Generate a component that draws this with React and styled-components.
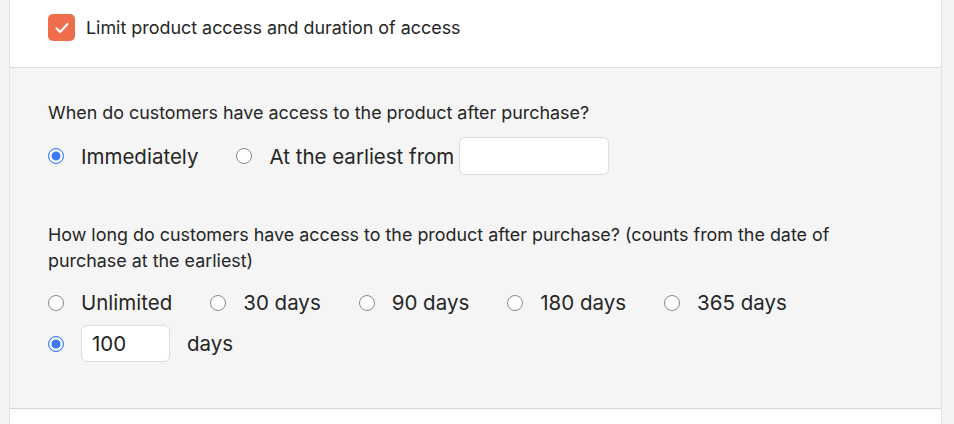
import React from "react";
import styled, { createGlobalStyle } from "styled-components";

const GlobalStyle = createGlobalStyle`
  body {
    margin: 0;
    background: #f3f3f3;
    font-family: Inter, "Noto Sans", sans-serif;
    color: #262626;
  }
`;

const Page = styled.div`
  padding: 0 12px 0 9px;
  height: 424px;
  overflow: hidden;
`;

const Card = styled.div`
  background: #fff;
  border-left: 1px solid #e2e2e2;
  border-right: 1px solid #e2e2e2;
  height: 100%;
`;

const Header = styled.div`
  display: flex;
  align-items: center;
  gap: 11px;
  height: 68px;
  padding: 0 38px;
  box-sizing: border-box;
  border-bottom: 1px solid #dadada;
  font-size: 17.9px;
`;

const CheckBox = styled.span`
  width: 27px;
  height: 27px;
  border-radius: 5px;
  background: #ef6d4b;
  display: flex;
  align-items: center;
  justify-content: center;
  margin-top: -12px;
`;

const HeaderLabel = styled.span`
  margin-top: -12px;
`;

const Body = styled.div`
  background: #f5f5f5;
  border-bottom: 1px solid #d6d6d6;
  padding: 32px 38px 46px;
  display: flex;
  flex-direction: column;
`;

const Question = styled.p`
  margin: 0;
  margin-top: ${(p) => p.$top || 0}px;
  font-size: 17.9px;
  line-height: 26px;
`;

const Row = styled.div`
  display: flex;
  align-items: center;
  gap: 38px;
  margin-top: ${(p) => p.$top || 0}px;
`;

const Option = styled.label`
  display: flex;
  align-items: center;
  gap: ${(p) => p.$gap || 17}px;
  font-size: 20.5px;
`;

const Radio = styled.span`
  width: 16px;
  height: 16px;
  border-radius: 50%;
  box-sizing: border-box;
  flex: none;
  background: #fff;
  border: 1px solid #8a8a8a;
  ${(p) =>
    p.$checked &&
    `
    background: #3b7cf6;
    border: 1.5px solid #3b7cf6;
    box-shadow: inset 0 0 0 2.5px #fff;
  `}
`;

const Field = styled.span`
  display: inline-flex;
  align-items: center;
  box-sizing: border-box;
  width: ${(p) => p.$w}px;
  height: ${(p) => p.$h}px;
  margin-left: ${(p) => p.$shift || 0}px;
  background: #fff;
  border: 1px solid #dcdcdc;
  border-radius: 6px;
  padding: 0 10px;
  font-size: 20.5px;
  color: #1e1e1e;
`;

export default function App() {
  return (
    <>
      <GlobalStyle />
      <Page>
        <Card>
          <Header>
            <CheckBox>
              <svg width="16" height="16" viewBox="0 0 16 16">
                <path
                  d="M2.5 8.5 L6.2 12 L13.5 4"
                  fill="none"
                  stroke="#fff"
                  strokeWidth="2.2"
                  strokeLinecap="round"
                  strokeLinejoin="round"
                />
              </svg>
            </CheckBox>
            <HeaderLabel>Limit product access and duration of access</HeaderLabel>
          </Header>
          <Body>
            <Question>When do customers have access to the product after purchase?</Question>
            <Row $top={11}>
              <Option>
                <Radio $checked />
                Immediately
              </Option>
              <Option>
                <Radio />
                <span>At the earliest from</span>
                <Field $w={150} $h={38} $shift={-12} />
              </Option>
            </Row>
            <Question $top={47}>
              How long do customers have access to the product after purchase? (counts from the date of purchase at the earliest)
            </Question>
            <Row $top={16}>
              <Option>
                <Radio />
                Unlimited
              </Option>
              <Option>
                <Radio />
                30 days
              </Option>
              <Option>
                <Radio />
                90 days
              </Option>
              <Option>
                <Radio />
                180 days
              </Option>
              <Option>
                <Radio />
                365 days
              </Option>
            </Row>
            <Row $top={10}>
              <Option>
                <Radio $checked />
                <Field $w={89} $h={37}>100</Field>
                days
              </Option>
            </Row>
          </Body>
        </Card>
      </Page>
    </>
  );
}
